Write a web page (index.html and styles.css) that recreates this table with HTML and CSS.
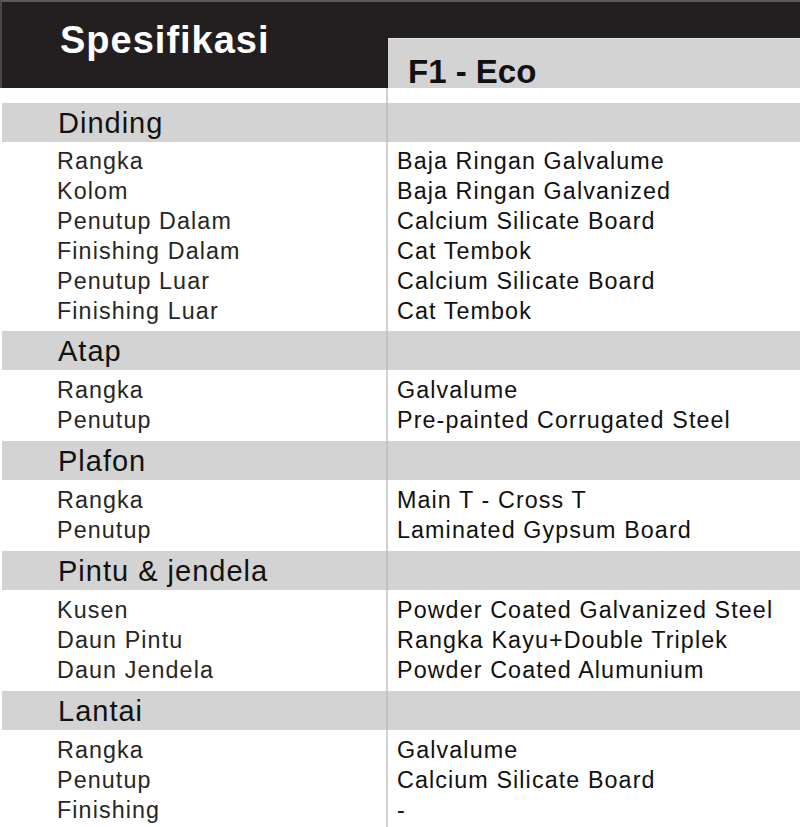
FILE: index.html
```html
<!DOCTYPE html>
<html lang="id">
<head>
<meta charset="utf-8">
<title>Spesifikasi F1 - Eco</title>
<link rel="stylesheet" href="styles.css">
</head>
<body>
<div class="sheet">
  <header class="head">
    <div class="head-title">Spesifikasi</div>
    <div class="head-model">F1 - Eco</div>
  </header>
  <div class="gap"><div></div><div class="col-r"></div></div>

  <section class="group">
    <div class="bar"><div class="bar-title">Dinding</div><div class="col-r"></div></div>
    <div class="items items-first">
      <ul class="keys">
        <li>Rangka</li><li>Kolom</li><li>Penutup Dalam</li><li>Finishing Dalam</li><li>Penutup Luar</li><li>Finishing Luar</li>
      </ul>
      <ul class="vals col-r">
        <li>Baja Ringan Galvalume</li><li>Baja Ringan Galvanized</li><li>Calcium Silicate Board</li><li>Cat Tembok</li><li>Calcium Silicate Board</li><li>Cat Tembok</li>
      </ul>
    </div>
  </section>

  <section class="group">
    <div class="bar"><div class="bar-title">Atap</div><div class="col-r"></div></div>
    <div class="items">
      <ul class="keys"><li>Rangka</li><li>Penutup</li></ul>
      <ul class="vals col-r"><li>Galvalume</li><li>Pre-painted Corrugated Steel</li></ul>
    </div>
  </section>

  <section class="group">
    <div class="bar"><div class="bar-title">Plafon</div><div class="col-r"></div></div>
    <div class="items">
      <ul class="keys"><li>Rangka</li><li>Penutup</li></ul>
      <ul class="vals col-r"><li>Main T - Cross T</li><li>Laminated Gypsum Board</li></ul>
    </div>
  </section>

  <section class="group">
    <div class="bar"><div class="bar-title">Pintu &amp; jendela</div><div class="col-r"></div></div>
    <div class="items">
      <ul class="keys"><li>Kusen</li><li>Daun Pintu</li><li>Daun Jendela</li></ul>
      <ul class="vals col-r"><li>Powder Coated Galvanized Steel</li><li>Rangka Kayu+Double Triplek</li><li>Powder Coated Alumunium</li></ul>
    </div>
  </section>

  <section class="group">
    <div class="bar"><div class="bar-title">Lantai</div><div class="col-r"></div></div>
    <div class="items">
      <ul class="keys"><li>Rangka</li><li>Penutup</li><li>Finishing</li></ul>
      <ul class="vals col-r"><li>Galvalume</li><li>Calcium Silicate Board</li><li>-</li></ul>
    </div>
  </section>
</div>
</body>
</html>
```
FILE: styles.css
```css
* { box-sizing: border-box; }
html, body { margin: 0; padding: 0; background: #fff; }
body {
  width: 800px;
  height: 827px;
  overflow: hidden;
  font-family: "Liberation Sans", Arial, sans-serif;
}
.sheet { width: 800px; }

.head {
  display: grid;
  grid-template-columns: 386px 1fr;
  height: 88px;
  background: #231f20;
  border-top: 2px solid #5b5859;
  border-left: 2px solid #4a4647;
}
.head-title {
  padding: 19px 0 0 58px;
  font-weight: bold;
  font-size: 38px;
  line-height: 38px;
  letter-spacing: 1px;
  color: #fff;
}
.head-model {
  align-self: end;
  height: 50px;
  background: #d3d3d3;
  border-top: 1px solid #e2e2e2;
  padding: 16px 0 0 20px;
  font-weight: bold;
  font-size: 33px;
  line-height: 33px;
  color: #111;
}

.gap {
  display: grid;
  grid-template-columns: 386px 1fr;
  height: 15px;
}
.col-r { border-left: 2px solid #d2d2d2; }

.bar {
  display: grid;
  grid-template-columns: 384px 1fr;
  height: 39px;
  margin-left: 2px;
  background: #d3d3d3;
}
.bar .col-r { border-left-color: #c2c2c2; }
.bar-title {
  padding-left: 56px;
  font-size: 29px;
  line-height: 40px;
  letter-spacing: 1px;
  color: #111;
}

.items {
  display: grid;
  grid-template-columns: 386px 1fr;
}
.keys, .vals {
  list-style: none;
  margin: 0;
  padding-top: 5px;
  padding-bottom: 6px;
  font-size: 23.3px;
  line-height: 30px;
  letter-spacing: 1.1px;
}
.items-first .keys, .items-first .vals { padding-top: 4px; padding-bottom: 5px; }
.keys { padding-left: 57px; color: #262626; }
.vals { padding-left: 9px; color: #111; }
.keys li, .vals li { height: 30px; white-space: nowrap; }
```
